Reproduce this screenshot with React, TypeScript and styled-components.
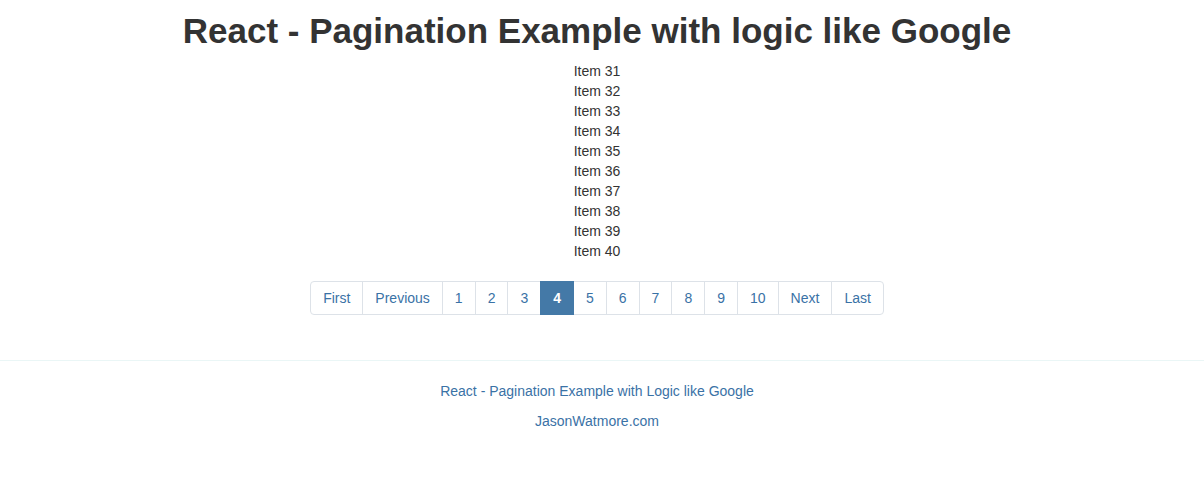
import React from "react";
import styled, { createGlobalStyle } from "styled-components";

const GlobalStyle = createGlobalStyle`
  html, body { margin: 0; padding: 0; background: #fff; }
  body {
    font-family: "Liberation Sans", Arial, Helvetica, sans-serif;
    font-size: 14px;
    line-height: 20px;
    color: #333;
  }
`;

const Page = styled.div`
  padding-right: 10px;
`;

const Main = styled.main`
  text-align: center;
  padding-bottom: 25px;
`;

const Title = styled.h1`
  margin: 11px 0 10px;
  font-size: 35px;
  line-height: 39.6px;
  font-weight: 700;
  color: #333;
`;

const ItemRow = styled.div`
  line-height: 20px;
  color: #333;
`;

const Pager = styled.ul`
  display: inline-flex;
  margin: 20px 0;
  padding: 0;
  list-style: none;
  border-radius: 4px;
`;

const PageItem = styled.li<{ $active?: boolean }>`
  display: block;
  padding: 6px 12px;
  line-height: 20px;
  color: ${(p) => (p.$active ? "#fff" : "#3a72a6")};
  background: ${(p) => (p.$active ? "#4479a7" : "#fff")};
  border: 1px solid ${(p) => (p.$active ? "#4479a7" : "#dde2e8")};
  margin-left: -1px;
  font-weight: ${(p) => (p.$active ? 700 : 400)};
  position: relative;
  z-index: ${(p) => (p.$active ? 2 : 0)};
  &:first-child {
    margin-left: 0;
    border-radius: 4px 0 0 4px;
  }
  &:last-child {
    border-radius: 0 4px 4px 0;
  }
`;

const Footer = styled.footer`
  border-top: 1px solid #eaf6f6;
  padding-top: 20px;
  text-align: center;
  margin-right: -10px;
  padding-right: 10px;
`;

const FooterLink = styled.p`
  margin: 0 0 10px;
  color: #3a72a6;
`;

const pages = ["First", "Previous", "1", "2", "3", "4", "5", "6", "7", "8", "9", "10", "Next", "Last"];

export default function App() {
  const items = Array.from({ length: 10 }, (_, i) => `Item ${31 + i}`);
  return (
    <Page>
      <GlobalStyle />
      <Main>
        <Title>React - Pagination Example with logic like Google</Title>
        {items.map((t) => (
          <ItemRow key={t}>{t}</ItemRow>
        ))}
        <Pager>
          {pages.map((p) => (
            <PageItem key={p} $active={p === "4"}>
              {p}
            </PageItem>
          ))}
        </Pager>
      </Main>
      <Footer>
        <FooterLink>React - Pagination Example with Logic like Google</FooterLink>
        <FooterLink>JasonWatmore.com</FooterLink>
      </Footer>
    </Page>
  );
}
